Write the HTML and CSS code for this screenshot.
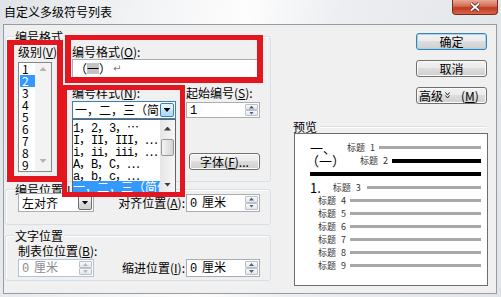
FILE: index.html
```html
<!DOCTYPE html>
<html>
<head>
    <meta charset="UTF-8">
    <link rel="stylesheet" href="styles.css">
</head>
<body>
<div class="window">
    <div class="titlebar">
        <span class="title">自定义多级符号列表</span>
        <span class="close">
            <svg width="14" height="10" viewBox="0 0 14 10"><path d="M3 1.5L11 8.5M11 1.5L3 8.5" stroke="#5a1a10" stroke-width="3.4"/><path d="M3 1.5L11 8.5M11 1.5L3 8.5" stroke="#fff" stroke-width="1.8"/></svg>
        </span>
    </div>
    <div class="client">
        <div class="left">
            <!-- 编号格式 -->
            <div class="group g1">
                <div class="caption">编号格式</div>
                <div class="g1-body">
                    <div class="levels">
                        <div class="label">级别(<u>V</u>)</div>
                        <div class="listbox">
                            <ul class="items">
                                <li>1</li><li class="sel">2</li><li>3</li><li>4</li><li>5</li><li>6</li><li>7</li><li>8</li><li>9</li>
                            </ul>
                            <div class="vscroll">
                                <i class="tri-up off"></i>
                                <i class="tri-dn off"></i>
                            </div>
                        </div>
                    </div>
                    <div class="format">
                        <div class="label">编号格式(<u>O</u>):</div>
                        <div class="edit fmt">（<span class="field">一</span>）<span class="ret">↵</span></div>
                        <div class="format-row">
                            <div class="style-col">
                                <div class="label">编号样式(<u>N</u>):</div>
                                <div class="combo open">
                                    <span class="combo-text">一，二，三（简体中文）</span>
                                    <span class="dd"><i class="tri-dn"></i></span>
                                </div>
                                <!-- 下拉列表 -->
                                <div class="popup">
                                    <ul class="items">
                                        <li><span class="m">1</span>，<span class="m">2</span>，<span class="m">3</span>，⋯</li>
                                        <li><span class="m">I</span>，<span class="m">II</span>，<span class="m">III</span>，⋯</li>
                                        <li><span class="m">i</span>，<span class="m">ii</span>，<span class="m">iii</span>，⋯</li>
                                        <li><span class="m">A</span>，<span class="m">B</span>，<span class="m">C</span>，⋯</li>
                                        <li><span class="m">a</span>，<span class="m">b</span>，<span class="m">c</span>，⋯</li>
                                        <li class="sel">一，二，三（简体中文）</li>
                                    </ul>
                                    <div class="pscroll">
                                        <span class="sb-btn"><i class="tri-up"></i></span>
                                        <span class="thumb"></span>
                                        <span class="sb-btn bottom"><i class="tri-dn"></i></span>
                                    </div>
                                </div>
                            </div>
                            <div class="start-col">
                                <div class="label">起始编号(<u>S</u>):</div>
                                <div class="spin">
                                    <span class="val"><span class="m">1</span></span>
                                    <span class="spinbtns"><i><b class="tri-up"></b></i><i><b class="tri-dn"></b></i></span>
                                </div>
                                <div class="btn font-btn">字体(<u>F</u>)...</div>
                            </div>
                        </div>
                    </div>
                </div>
            </div>
            <!-- 编号位置 -->
            <div class="group g2">
                <div class="caption">编号位置(<u>U</u>):</div>
                <div class="ctl-row">
                    <div class="combo list-combo">
                        <span class="combo-text">左对齐</span>
                        <span class="dd"><i class="tri-dn"></i></span>
                    </div>
                    <div class="row-label">对齐位置(<u>A</u>):</div>
                    <div class="spin">
                        <span class="val"><span class="m">0&nbsp;</span>厘米</span>
                        <span class="spinbtns"><i><b class="tri-up"></b></i><i><b class="tri-dn"></b></i></span>
                    </div>
                </div>
            </div>
            <!-- 文字位置 -->
            <div class="group g3">
                <div class="caption">文字位置</div>
                <div class="label">制表位位置(<u>B</u>):</div>
                <div class="ctl-row">
                    <div class="spin disabled">
                        <span class="val"><span class="m">0&nbsp;</span>厘米</span>
                        <span class="spinbtns"><i><b class="tri-up"></b></i><i><b class="tri-dn"></b></i></span>
                    </div>
                    <div class="row-label">缩进位置(<u>I</u>):</div>
                    <div class="spin">
                        <span class="val"><span class="m">0&nbsp;</span>厘米</span>
                        <span class="spinbtns"><i><b class="tri-up"></b></i><i><b class="tri-dn"></b></i></span>
                    </div>
                </div>
            </div>
        </div>
        <div class="right">
            <div class="buttons">
                <div class="btn default">确定</div>
                <div class="btn">取消</div>
                <div class="btn more">高级<svg width="5" height="7" viewBox="0 0 5 7"><path d="M0.5 0.5L2.5 3L4.5 0.5M0.5 3.5L2.5 6L4.5 3.5" fill="none" stroke="#222" stroke-width="1"/></svg><span class="mn">(<u>M</u>)</span></div>
            </div>
            <div class="preview-head"><span>预览</span><i class="etch"></i></div>
            <!-- 预览 -->
            <div class="preview">
                <div class="pv-row r1"><span class="pv-num">一、</span><span class="pv-label">标题<span class="n">1</span></span><i class="pv-line"></i></div>
                <div class="pv-row r2"><span class="pv-num">（一）</span><span class="pv-label">标题<span class="n">2</span></span><i class="pv-line black"></i></div>
                <div class="pv-row r3"><i class="pv-line black"></i></div>
                <div class="pv-row r4"><span class="pv-num">1.</span><span class="pv-label">标题<span class="n">3</span></span><i class="pv-line"></i></div>
                <div class="pv-row sub"><span class="pv-label">标题<span class="n">4</span></span><i class="pv-line"></i></div>
                <div class="pv-row sub"><span class="pv-label">标题<span class="n">5</span></span><i class="pv-line"></i></div>
                <div class="pv-row sub"><span class="pv-label">标题<span class="n">6</span></span><i class="pv-line"></i></div>
                <div class="pv-row sub"><span class="pv-label">标题<span class="n">7</span></span><i class="pv-line"></i></div>
                <div class="pv-row sub"><span class="pv-label">标题<span class="n">8</span></span><i class="pv-line"></i></div>
                <div class="pv-row sub"><span class="pv-label">标题<span class="n">9</span></span><i class="pv-line"></i></div>
            </div>
        </div>
    </div>
    <!-- 红框标注 -->
    <div class="mark m1"></div>
    <div class="mark m2"></div>
    <div class="mark m3"></div>
</div>
</body>
</html>
```

FILE: styles.css
```css
body,div,span,ul,li,i,b{margin: 0;padding: 0;}
ul{list-style: none;}
i,b{display: block;font-style: normal;font-weight: normal;}
body{
    width: 501px;height: 297px;overflow: hidden;
    font-family: "Noto Sans CJK SC", sans-serif;
    font-size: 12px;line-height: 12px;color: #000;
}
u{text-decoration: underline;text-underline-offset: 1px;}
.m{font-family: "Liberation Mono", "Noto Sans CJK SC", monospace;letter-spacing: -1.2px;}

/* 窗口 */
.window{
    position: relative;width: 501px;height: 297px;
    background: linear-gradient(100deg, #e0e3e7 0%, #f2f3f5 25%, #fdfdfd 45%, #eceef1 62%, #e1e4e8 100%);
}
.titlebar{display: flex;height: 24px;}
.title{padding-left: 4px;line-height: 23px;white-space: nowrap;}
.close{
    display: flex;align-items: center;justify-content: center;
    margin-left: auto;margin-right: 3px;width: 46px;height: 15px;
    box-sizing: border-box;border: 1px solid #7b2a1c;border-top: 0;
    border-radius: 0 0 4px 4px;
    background: linear-gradient(#eaa996, #d26a52 45%, #c03a20 55%, #d7664b);
}
.client{
    display: flex;margin-left: 3px;width: 494px;height: 270px;
    box-sizing: border-box;border: 1px solid #979ca3;background: #f0f0f0;
}

/* 分组框 */
.left{margin-left: 1px;width: 266px;}
.group{border: 1px solid #d5dfe5;border-radius: 3px;box-shadow: inset 1px 1px 0 #fff;}
.caption{
    width: fit-content;margin: -7px 0 0 8px;padding: 0 1px;
    line-height: 13px;background: #f0f0f0;white-space: nowrap;
}
.label{height: 12px;line-height: 12px;white-space: nowrap;}

.g1{margin-top: 11px;padding-bottom: 9px;}
.g1-body{display: flex;margin-top: 3px;padding-left: 12px;}
.levels{width: 34px;}
.listbox{
    display: flex;margin-top: 4px;height: 110px;
    box-sizing: border-box;border: 1px solid #828790;background: #fff;
}
.levels .items{width: 16px;}
.levels li{height: 12px;line-height: 12px;margin-left: 1px;padding-left: 2px;}
.sel{background: #3399ff;color: #fff;}
.vscroll{
    flex: 1;display: flex;flex-direction: column;
    justify-content: space-between;align-items: center;
    padding: 4px 0 8px;background: #f3f3f3;
}
.tri-up,.tri-dn{width: 7px;height: 4px;background: #000;}
.tri-up{clip-path: polygon(50% 0, 100% 100%, 0 100%);}
.tri-dn{clip-path: polygon(0 0, 100% 0, 50% 100%);}
.tri-up.off,.tri-dn.off{background: #b4b4b4;}

.format{margin-left: 20px;width: 188px;}
.edit{box-sizing: border-box;border: 1px solid #abadb3;background: #fff;}
.fmt{display: flex;align-items: center;margin-top: 1px;width: 186px;height: 19px;padding-left: 2px;}
.field{height: 11px;line-height: 11px;background: #c3c3c3;}
.ret{margin-left: 2px;font-size: 10px;color: #7a7a7a;font-family: "DejaVu Sans", sans-serif;}

.format-row{display: flex;margin-top: 8px;}
.style-col{position: relative;width: 104px;}
.style-col .label,.start-col .label{height: 13px;line-height: 13px;}

/* 组合框 */
.combo{
    display: flex;box-sizing: border-box;height: 19px;
    border: 1px solid #abadb3;background: #fff;
}
.combo-text{flex: 1;overflow: hidden;white-space: nowrap;padding-left: 3px;line-height: 17px;}
.dd{
    display: flex;align-items: center;justify-content: center;
    width: 14px;margin: 1px;box-sizing: border-box;
    border: 1px solid #707070;border-radius: 2px;
    background: linear-gradient(#f2f2f2, #ebebeb 49%, #dddddd 50%, #cfcfcf);
}
.combo.open{margin-top: 2px;height: 18px;border-color: #3c7fb1;}
.combo.open .combo-text{padding-left: 2px;line-height: 16px;}
.combo.open .dd{
    border-color: #3c7fb1;
    background: linear-gradient(#eaf6fd, #d9f0fc 49%, #bee6fd 50%, #a7d9f5);
}
.list-combo{width: 76px;}

.popup{
    position: absolute;left: 0;top: 33px;z-index: 2;
    display: flex;width: 104px;height: 75px;
    box-sizing: border-box;border: 1px solid #646464;background: #fff;
}
.popup .items{flex: 1;padding-top: 1px;overflow: hidden;}
.popup li{height: 12px;line-height: 12px;white-space: nowrap;overflow: hidden;}
.pscroll{
    display: flex;flex-direction: column;width: 15px;
    background: linear-gradient(to right, #e6e6e6, #f6f6f6);
}
.sb-btn{display: flex;align-items: center;justify-content: center;height: 17px;}
.sb-btn .tri-up,.sb-btn .tri-dn{background: #3c3c3c;}
.sb-btn.bottom{margin-top: auto;}
.thumb{
    display: block;margin: 2px 1px 0;height: 17px;box-sizing: border-box;
    border: 1px solid #979797;border-radius: 2px;
    background: linear-gradient(to right, #f4f4f4, #e4e4e4 50%, #d3d3d3);
}

/* 微调框 */
.start-col{margin-left: 10px;width: 74px;}
.spin{
    display: flex;box-sizing: border-box;width: 74px;height: 18px;
    border: 1px solid #abadb3;background: #fff;
}
.start-col .spin{margin-top: 3px;height: 16px;}
.val{flex: 1;align-self: center;padding-left: 3px;white-space: nowrap;}
.spinbtns{display: flex;flex-direction: column;width: 13px;margin: 1px;}
.spinbtns i{
    flex: 1;display: flex;align-items: center;justify-content: center;
    box-sizing: border-box;border: 1px solid #b9c0c9;border-radius: 1px;
    background: linear-gradient(#fafafa, #e3e5e8);
}
.spinbtns .tri-up,.spinbtns .tri-dn{width: 5px;height: 3px;background: #4d6185;}
.spin.disabled{width: 76px;border-color: #afc4d9;color: #8c8c8c;}
.spin.disabled .spinbtns .tri-up,.spin.disabled .spinbtns .tri-dn{background: #b2bac4;}

.font-btn{margin: 35px 0 0 3px;width: 70px;height: 16px;line-height: 14px;}

.g2{margin-top: 7px;padding-bottom: 12px;}
.ctl-row{display: flex;align-items: center;padding-left: 12px;}
.g2 .ctl-row{margin-top: -3px;}
.row-label{width: 92px;padding-right: 1px;box-sizing: border-box;text-align: right;white-space: nowrap;}
.g3{margin-top: 10px;padding-bottom: 3px;}
.g3>.label{margin-top: 3px;padding-left: 12px;}
.g3 .ctl-row{margin-top: 2px;}

/* 按钮 */
.right{margin-left: 22px;width: 195px;}
.buttons{display: flex;flex-direction: column;align-items: flex-end;gap: 10px;padding: 8px 1px 0 0;}
.btn{
    box-sizing: border-box;width: 71px;height: 17px;
    border: 1px solid #707070;border-radius: 3px;
    background: linear-gradient(#f2f2f2, #ebebeb 49%, #dddddd 50%, #cfcfcf);
    box-shadow: inset 0 0 0 1px #fbfbfb;
    text-align: center;line-height: 15px;white-space: nowrap;
}
.btn.default{border-color: #3c7fb1;box-shadow: inset 0 0 0 1px #a4d6f4;}
.btn.more{display: flex;align-items: center;padding-left: 2px;}
.btn.more svg{margin-left: 2px;}
.btn.more .mn{margin-left: 11px;}

/* 预览 */
.preview-head{display: flex;align-items: center;margin-top: 17px;height: 12px;}
.etch{flex: 1;margin: 0 1px 0 3px;border-top: 1px solid #d5dfe5;border-bottom: 1px solid #fff;}
.preview{
    margin-left: 1px;width: 194px;height: 153px;box-sizing: border-box;
    border: 1px solid #6d6d6d;background: #fff;padding: 7px 6px 0 15px;
}
.pv-row{display: flex;align-items: center;height: 13px;}
.pv-num{font-size: 13px;line-height: 13px;white-space: nowrap;}
.pv-label{font-size: 9px;line-height: 9px;color: #333;white-space: nowrap;display: flex;}
.pv-label .n{margin-left: 5px;}
.pv-line{flex: 1;height: 3px;margin-left: 4px;background: #a8a8a8;}
.pv-line.black{height: 4px;background: #000;}
.r1 .pv-label{margin-left: 11px;}
.r2 .pv-num{margin-left: -4px;}
.r2 .pv-label{margin-left: 15px;}
.r3{height: 14px;}
.r3 .pv-line{margin-left: 0;}
.r4 .pv-label{margin-left: 12px;}
.r4 .pv-line{margin-left: 6px;}
.sub{padding-left: 8px;}

/* 红框标注 */
.mark{position: absolute;z-index: 5;box-sizing: border-box;border: 6px solid #e3161f;}
.m1{left: 7px;top: 40px;width: 56px;height: 142px;border-width: 5px 6px 6px 7px;}
.m2{left: 65px;top: 35px;width: 198px;height: 48px;border-width: 5px 6px 6px 6px;}
.m3{left: 62px;top: 85px;width: 123px;height: 112px;border-width: 5px;}
```
